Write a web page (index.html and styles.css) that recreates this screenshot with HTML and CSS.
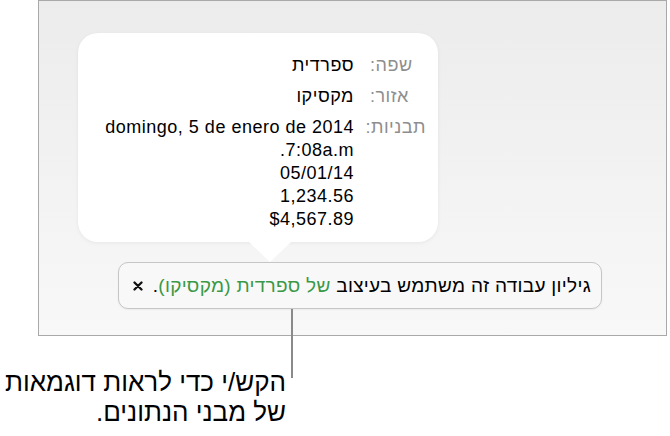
FILE: index.html
```html
<!DOCTYPE html>
<html lang="he">
<head>
    <meta charset="UTF-8">
    <title>מבני נתונים</title>
    <link rel="stylesheet" href="styles.css">
</head>
<body>
    <div class="figure">
        <div class="panel">
            <div class="popover">
                <div class="formats">
                    <div class="label">שפה:</div>
                    <div class="value"><div>ספרדית</div></div>
                    <div class="label">אזור:</div>
                    <div class="value"><div>מקסיקו</div></div>
                    <div class="label">תבניות:</div>
                    <div class="value">
                        <div>domingo, 5 de enero de 2014</div>
                        <div>7:08a.m.</div>
                        <div>05/01/14</div>
                        <div>1,234.56</div>
                        <div>$4,567.89</div>
                    </div>
                </div>
            </div>
            <div class="banner">
                <span class="message">גיליון עבודה זה משתמש בעיצוב <span class="locale">של ספרדית (מקסיקו)</span>.</span>
                <svg class="close" width="10" height="10" viewBox="0 0 10 10">
                    <path d="M1.5 1.5 L8.5 8.5 M8.5 1.5 L1.5 8.5" stroke="#111" stroke-width="2.3" stroke-linecap="round"/>
                </svg>
            </div>
        </div>
        <span class="leader"></span>
        <p class="caption">הקש/י כדי לראות דוגמאות<br>של מבני הנתונים.</p>
    </div>
</body>
</html>
```

FILE: styles.css
```css
* {
    margin: 0;
    padding: 0;
    box-sizing: border-box;
}
body {
    background: #fff;
    font-family: "Liberation Sans", "DejaVu Sans", sans-serif;
    color: #000;
}
.figure {
    position: relative;
    width: 670px;
    height: 436px;
}
.panel {
    margin-left: 38px;
    width: 629px;
    height: 336px;
    border: 1px solid #a9a9a9;
    background: linear-gradient(#ececec, #f8f8f8);
    padding: 32px 0 0 39px;
}
.popover {
    position: relative;
    width: 360px;
    height: 209px;
    background: #fff;
    border-radius: 20px;
    padding: 21px 12px 0 0;
    direction: rtl;
    box-shadow: 0 1px 4px rgba(0, 0, 0, 0.06);
}
.popover:after {
    content: '';
    position: absolute;
    left: 171px;
    bottom: -20px;
    width: 42px;
    height: 20px;
    background: #fff;
    clip-path: polygon(0 0, 100% 0, 50% 100%);
}
.formats {
    display: grid;
    grid-template-columns: 56px auto;
    column-gap: 16px;
    row-gap: 8px;
    font-size: 18px;
    line-height: 23px;
    letter-spacing: 0.5px;
}
.label {
    color: #8e8e8e;
    text-align: left;
}
.value {
    text-align: right;
}
.banner {
    display: flex;
    align-items: center;
    gap: 6px;
    direction: rtl;
    width: 484px;
    height: 47px;
    margin: 20px 0 0 40px;
    padding: 0 10px 0 14px;
    background: #f8f8f8;
    border: 1px solid #c6c6c6;
    border-radius: 10px;
    box-shadow: 0 1px 2px rgba(0, 0, 0, 0.05);
    font-size: 19px;
    letter-spacing: 0.3px;
    white-space: nowrap;
}
.message {
    flex: 1;
}
.locale {
    color: #3a9846;
}
.close {
    flex: none;
}
.leader {
    position: absolute;
    left: 291px;
    top: 309px;
    width: 2px;
    height: 69px;
    background: #8a8a8a;
}
.caption {
    width: 286px;
    margin-top: 31px;
    direction: rtl;
    text-align: right;
    font-size: 26px;
    line-height: 30px;
    white-space: nowrap;
}
```
